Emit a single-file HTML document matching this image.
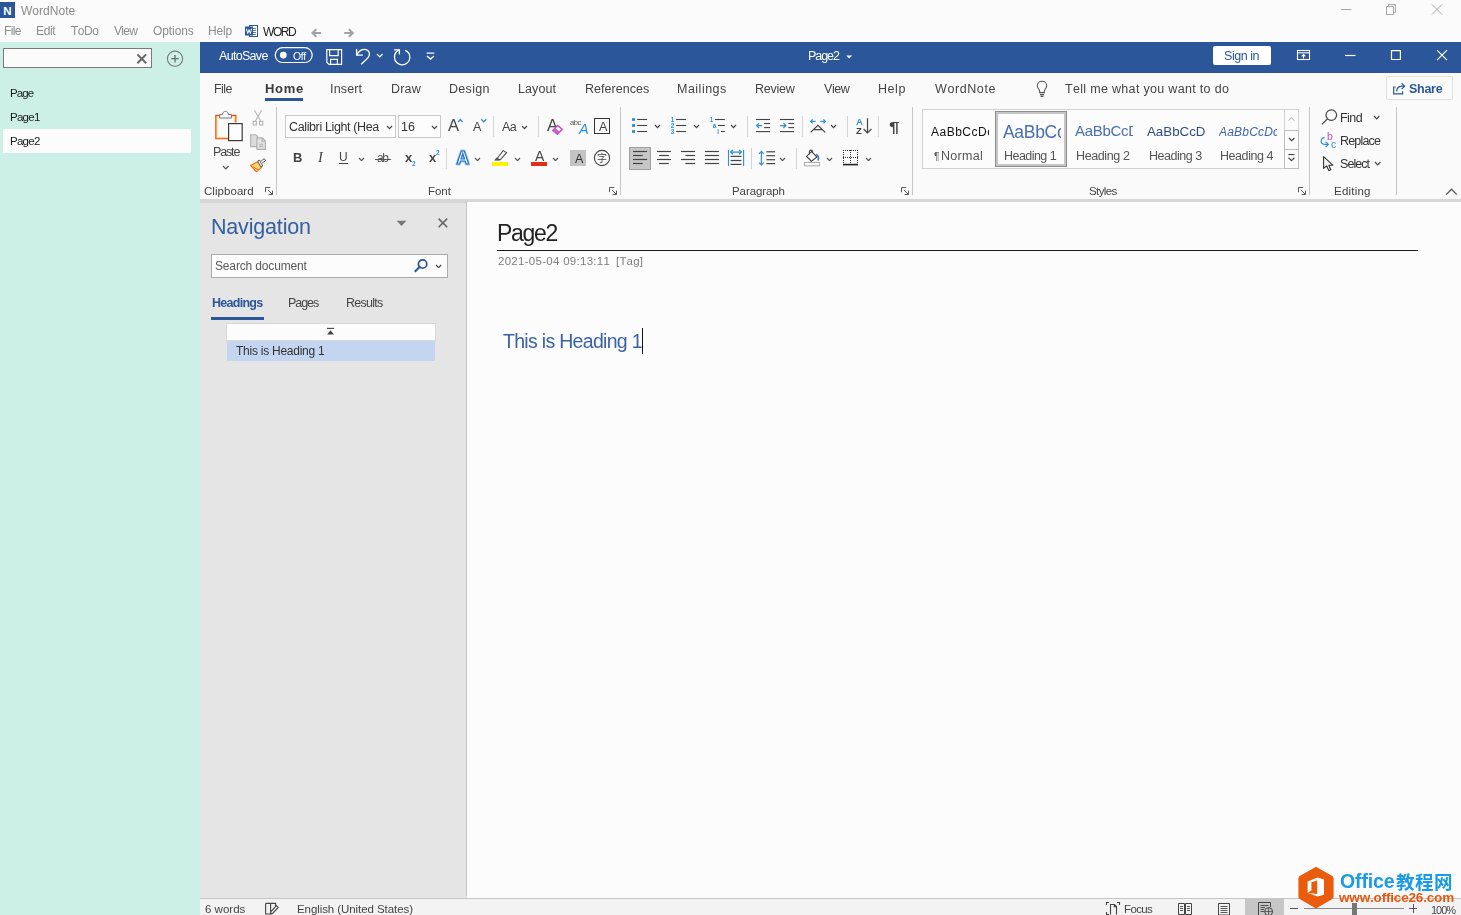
<!DOCTYPE html>
<html><head><meta charset="utf-8"><title>WordNote</title>
<style>
html,body{margin:0;padding:0;}
body{width:1461px;height:915px;overflow:hidden;background:#fbfbfb;font-family:"Liberation Sans","Noto Sans CJK SC",sans-serif;}
#app{position:relative;width:1461px;height:915px;overflow:hidden;}
.t{position:absolute;white-space:pre;line-height:1;will-change:transform;font-kerning:none;}
.r{position:absolute;display:block;}
</style></head><body><div id="app">
<div class="r" style="left:0px;top:0px;width:1461px;height:42px;background:#fbfbfb;"></div>
<div class="r" style="left:0px;top:42px;width:200px;height:873px;background:#cdf0e6;"></div>
<div class="r" style="left:200px;top:42px;width:1261px;height:31px;background:#2b579a;"></div>
<div class="r" style="left:200px;top:73px;width:1261px;height:126px;background:#fafafa;"></div>
<div class="r" style="left:200px;top:199px;width:1261px;height:4px;background:#d6d6d6;"></div>
<div class="r" style="left:200px;top:203px;width:267px;height:695px;background:#e5e5e5;"></div>
<div class="r" style="left:466px;top:202px;width:1px;height:694px;background:#c6c6c6;"></div>
<div class="r" style="left:467px;top:202px;width:994px;height:696px;background:#fcfcfc;"></div>
<div class="r" style="left:200px;top:898px;width:1261px;height:17px;background:#f3f3f3;"></div>
<div class="r" style="left:200px;top:898px;width:1261px;height:1px;background:#c6c6c6;"></div>
<svg class="r" style="left:0px;top:2px;" width="15" height="16" viewBox="0 0 15 16"><rect width="15" height="16" fill="#2b579a"/><text x="7.3" y="12.6" font-family="Liberation Sans, sans-serif" font-weight="bold" font-size="11.5" fill="#fff" text-anchor="middle">N</text></svg>
<span class="t" style="left:21.25px;top:5px;font-size:12px;color:#8a8a8a;letter-spacing:0.024px;">WordNote</span>
<svg class="r" style="left:1340px;top:3px;" width="106" height="13" viewBox="0 0 106 13"><g fill="none" stroke="#a6a6a6" stroke-width="1"><path d="M1 6.5H11.5"/><path d="M46.5 3.5H53.5V11.5H46.5Z"/><path d="M48.5 3.5V1.5H55.5V9.5H53.5"/><path d="M92 1.5L102 11.5M102 1.5L92 11.5"/></g></svg>
<span class="t" style="left:4.32px;top:25px;font-size:12px;color:#8c8c8c;letter-spacing:-0.673px;">File</span>
<span class="t" style="left:36.12px;top:25px;font-size:12px;color:#8c8c8c;letter-spacing:-0.368px;">Edit</span>
<span class="t" style="left:70.53px;top:25px;font-size:12px;color:#8c8c8c;letter-spacing:-0.490px;">ToDo</span>
<span class="t" style="left:113.75px;top:25px;font-size:12px;color:#8c8c8c;letter-spacing:-0.729px;">View</span>
<span class="t" style="left:152.83px;top:25px;font-size:12px;color:#8c8c8c;letter-spacing:-0.092px;">Options</span>
<span class="t" style="left:207.82px;top:25px;font-size:12px;color:#8c8c8c;letter-spacing:-0.130px;">Help</span>
<span class="t" style="left:262.95px;top:26px;font-size:12px;color:#222;letter-spacing:-1.422px;">WORD</span>
<svg class="r" style="left:245px;top:24px;" width="13" height="14" viewBox="0 0 13 14"><rect x="4.5" y="1.5" width="8" height="11" fill="#fff" stroke="#2b579a" stroke-width="1"/><path d="M7 4.5H11M7 6.5H11M7 8.5H11M7 10.5H11" stroke="#2b579a" stroke-width="0.8"/><rect x="0" y="2.5" width="8" height="9" fill="#2b579a"/><path d="M1.4 4.6L2.7 9.5L4 5.6L5.3 9.5L6.6 4.6" fill="none" stroke="#fff" stroke-width="1"/></svg>
<svg class="r" style="left:309px;top:27px;" width="47" height="12" viewBox="0 0 47 12"><g fill="none" stroke="#a2a2a2" stroke-width="2"><path d="M12 6H3.6M7.4 2.2L3.4 6L7.4 9.8"/><path d="M35.2 6H43.6M39.8 2.2L43.8 6L39.8 9.8"/></g></svg>
<div class="r" style="left:3px;top:48px;width:149px;height:20px;background:#fbfbfb;border:1px solid #7a7a7a;box-sizing:border-box;"></div>
<svg class="r" style="left:136px;top:53px;" width="12" height="12" viewBox="0 0 12 12"><path d="M1.4 1.4L10.2 10.2M10.2 1.4L1.4 10.2" stroke="#666" stroke-width="2" fill="none"/></svg>
<svg class="r" style="left:166px;top:50px;" width="18" height="18" viewBox="0 0 18 18"><circle cx="9" cy="8.7" r="7.6" fill="none" stroke="#7a7a7a" stroke-width="1.1"/><path d="M5.2 8.7H12.8M9 4.9V12.5" stroke="#6a6a6a" stroke-width="1.3"/></svg>
<div class="r" style="left:3px;top:129px;width:188px;height:24px;background:#fcfcfc;"></div>
<span class="t" style="left:10.16px;top:88px;font-size:11.5px;color:#1a1a1a;letter-spacing:-0.868px;">Page</span>
<span class="t" style="left:10.16px;top:112px;font-size:11.5px;color:#1a1a1a;letter-spacing:-0.737px;">Page1</span>
<span class="t" style="left:10.16px;top:136px;font-size:11.5px;color:#1a1a1a;letter-spacing:-0.733px;">Page2</span>
<span class="t" style="left:218.58px;top:50px;font-size:12.5px;color:#fff;letter-spacing:-0.689px;">AutoSave</span>
<svg class="r" style="left:274px;top:47px;" width="40" height="17" viewBox="0 0 40 17"><rect x="1.2" y="0.7" width="37" height="14.8" rx="7.4" fill="none" stroke="#fff" stroke-width="1.2"/><circle cx="9.3" cy="8.1" r="3.4" fill="#fff"/></svg>
<span class="t" style="left:293.30px;top:51px;font-size:10.5px;color:#fff;letter-spacing:-0.360px;">Off</span>
<svg class="r" style="left:325px;top:48px;" width="18" height="18" viewBox="0 0 18 18"><g fill="none" stroke="#fff" stroke-width="1.2"><path d="M1.8 1.6H16.6V16.4H4L1.8 14.2Z"/><path d="M4.6 1.6V7.6H13.2V1.6"/><path d="M5.6 16.4V11.4H12.4V16.4"/></g></svg>
<svg class="r" style="left:354px;top:47px;" width="20" height="20" viewBox="0 0 20 20"><g fill="none" stroke="#fff" stroke-width="1.3"><path d="M2.6 2V8.1H8.8"/><path d="M2.8 7.9C4.6 4 8.4 1.6 12 2.6C15.6 3.6 16.4 7.4 14.4 10.2C12.6 12.6 9.8 14.8 7.2 17.4"/></g></svg>
<svg class="r" style="left:375.7px;top:53.15px;" width="7.6" height="4.9" viewBox="0 0 7.6 4.9"><path d="M1 1 L3.8 3.9000000000000004 L6.6 1" fill="none" stroke="#fff" stroke-width="1.15"/></svg>
<svg class="r" style="left:392px;top:47px;" width="20" height="20" viewBox="0 0 20 20"><g fill="none" stroke="#fff" stroke-width="1.3"><path d="M2 2.9H7.4V7.6"/><path d="M13.2 3.3C16.2 4.6 18.2 7.6 17.8 11.2C17.3 15.2 13.8 18 9.8 17.8C5.8 17.6 2.6 14.4 2.5 10.4C2.4 7.2 4.2 4.4 7 3.2"/></g></svg>
<svg class="r" style="left:425px;top:51px;" width="11" height="10" viewBox="0 0 11 10"><path d="M1.6 2.1H9.4" stroke="#fff" stroke-width="1.2"/><path d="M2 5L5.5 8L9 5" fill="none" stroke="#fff" stroke-width="1.4"/></svg>
<span class="t" style="left:808.27px;top:50px;font-size:12.5px;color:#fff;letter-spacing:-1.048px;">Page2</span>
<svg class="r" style="left:845px;top:54px;" width="9" height="6" viewBox="0 0 9 6"><path d="M1.2 1.4H7.2L4.2 4.6Z" fill="#fff"/></svg>
<div class="r" style="left:1213px;top:46px;width:58px;height:19px;background:#fff;border-radius:2px;"></div>
<span class="t" style="left:1224.23px;top:50px;font-size:12.5px;color:#2b579a;letter-spacing:-0.457px;">Sign in</span>
<svg class="r" style="left:1296px;top:49px;" width="15" height="12" viewBox="0 0 15 12"><g fill="none" stroke="#fff" stroke-width="1.1"><rect x="1.5" y="1.5" width="12" height="9"/><path d="M1.5 3.8H13.5"/><path d="M7.5 9.4V5.6M5.6 7.4L7.5 5.5L9.4 7.4"/></g></svg>
<svg class="r" style="left:1344px;top:49px;" width="106" height="13" viewBox="0 0 106 13"><g fill="none" stroke="#fff" stroke-width="1.2"><path d="M1 6.5H11.5"/><path d="M47.5 1.6H56.4V10.5H47.5Z"/><path d="M93 1.2L103 11.2M103 1.2L93 11.2"/></g></svg>
<span class="t" style="left:213.77px;top:83px;font-size:12.5px;color:#444;letter-spacing:-0.587px;">File</span>
<span class="t" style="left:329.65px;top:83px;font-size:12.5px;color:#444;letter-spacing:0.157px;">Insert</span>
<span class="t" style="left:390.77px;top:83px;font-size:12.5px;color:#444;letter-spacing:0.209px;">Draw</span>
<span class="t" style="left:448.97px;top:83px;font-size:12.5px;color:#444;letter-spacing:0.305px;">Design</span>
<span class="t" style="left:517.77px;top:83px;font-size:12.5px;color:#444;letter-spacing:0.077px;">Layout</span>
<span class="t" style="left:584.77px;top:83px;font-size:12.5px;color:#444;letter-spacing:0.039px;">References</span>
<span class="t" style="left:676.77px;top:83px;font-size:12.5px;color:#444;letter-spacing:0.490px;">Mailings</span>
<span class="t" style="left:754.77px;top:83px;font-size:12.5px;color:#444;letter-spacing:-0.238px;">Review</span>
<span class="t" style="left:823.75px;top:83px;font-size:12.5px;color:#444;letter-spacing:-0.423px;">View</span>
<span class="t" style="left:877.77px;top:83px;font-size:12.5px;color:#444;letter-spacing:0.547px;">Help</span>
<span class="t" style="left:934.75px;top:83px;font-size:12.5px;color:#444;letter-spacing:0.592px;">WordNote</span>
<span class="t" style="left:264.93px;top:82px;font-size:13px;color:#3a3a3a;font-weight:bold;letter-spacing:0.665px;">Home</span>
<div class="r" style="left:265px;top:98px;width:38px;height:3px;background:#2b579a;"></div>
<svg class="r" style="left:1035px;top:80px;" width="14" height="18" viewBox="0 0 14 18"><g fill="none" stroke="#555" stroke-width="1.1"><path d="M4.7 11.2C4.7 9.6 2.3 8.6 2.3 5.8C2.3 3.2 4.4 1.3 7 1.3C9.6 1.3 11.7 3.2 11.7 5.8C11.7 8.6 9.3 9.6 9.3 11.2V12.6H4.7Z"/><path d="M4.9 14.6H9.1M5.6 16.4H8.4"/></g></svg>
<span class="t" style="left:1064.92px;top:83px;font-size:12.5px;color:#444;letter-spacing:0.318px;">Tell me what you want to do</span>
<div class="r" style="left:1386px;top:76px;width:67px;height:24px;background:#fbfbfb;border:1px solid #e1e1e1;box-sizing:border-box;border-radius:2px;"></div>
<svg class="r" style="left:1392px;top:82px;" width="14" height="13" viewBox="0 0 14 13"><g fill="none" stroke="#2b579a" stroke-width="1.2"><path d="M3.6 5H1.7V11.8H10.6V9.2"/><path d="M4.6 9.4C4.8 6.4 6.6 4.4 9.6 4.2H12.4M9.6 1.2L12.6 4.2L9.6 7.2"/></g></svg>
<span class="t" style="left:1409.44px;top:83px;font-size:12.5px;color:#2b579a;font-weight:bold;letter-spacing:-0.288px;">Share</span>
<div class="r" style="left:276px;top:107px;width:1px;height:88px;background:#c6c6c6;"></div>
<div class="r" style="left:620px;top:107px;width:1px;height:88px;background:#c6c6c6;"></div>
<div class="r" style="left:912px;top:107px;width:1px;height:88px;background:#c6c6c6;"></div>
<div class="r" style="left:1309px;top:107px;width:1px;height:88px;background:#c6c6c6;"></div>
<div class="r" style="left:1396px;top:107px;width:1px;height:88px;background:#c6c6c6;"></div>
<div class="r" style="left:493px;top:116px;width:1px;height:21px;background:#d4d4d4;"></div>
<div class="r" style="left:538px;top:116px;width:1px;height:21px;background:#d4d4d4;"></div>
<div class="r" style="left:747px;top:116px;width:1px;height:21px;background:#d4d4d4;"></div>
<div class="r" style="left:802px;top:116px;width:1px;height:21px;background:#d4d4d4;"></div>
<div class="r" style="left:847px;top:116px;width:1px;height:21px;background:#d4d4d4;"></div>
<div class="r" style="left:878px;top:116px;width:1px;height:21px;background:#d4d4d4;"></div>
<div class="r" style="left:446px;top:148px;width:1px;height:21px;background:#d4d4d4;"></div>
<div class="r" style="left:751px;top:148px;width:1px;height:21px;background:#d4d4d4;"></div>
<div class="r" style="left:796px;top:148px;width:1px;height:21px;background:#d4d4d4;"></div>
<span class="t" style="left:203.92px;top:186px;font-size:11.5px;color:#444;letter-spacing:0.050px;">Clipboard</span>
<span class="t" style="left:428.36px;top:186px;font-size:11.5px;color:#444;letter-spacing:-0.061px;">Font</span>
<span class="t" style="left:732.36px;top:186px;font-size:11.5px;color:#444;letter-spacing:-0.089px;">Paragraph</span>
<span class="t" style="left:1088.78px;top:186px;font-size:11.5px;color:#444;letter-spacing:-0.616px;">Styles</span>
<span class="t" style="left:1334.36px;top:186px;font-size:11.5px;color:#444;letter-spacing:0.220px;">Editing</span>
<svg class="r" style="left:265px;top:187px;" width="9" height="9" viewBox="0 0 9 9"><g fill="none" stroke="#5a5a5a" stroke-width="1"><path d="M0.5 5.2V0.5H5.2"/><path d="M2.8 2.8L7.4 7.4M7.5 3.6V7.5H3.6"/></g></svg>
<svg class="r" style="left:609px;top:187px;" width="9" height="9" viewBox="0 0 9 9"><g fill="none" stroke="#5a5a5a" stroke-width="1"><path d="M0.5 5.2V0.5H5.2"/><path d="M2.8 2.8L7.4 7.4M7.5 3.6V7.5H3.6"/></g></svg>
<svg class="r" style="left:901px;top:187px;" width="9" height="9" viewBox="0 0 9 9"><g fill="none" stroke="#5a5a5a" stroke-width="1"><path d="M0.5 5.2V0.5H5.2"/><path d="M2.8 2.8L7.4 7.4M7.5 3.6V7.5H3.6"/></g></svg>
<svg class="r" style="left:1298px;top:187px;" width="9" height="9" viewBox="0 0 9 9"><g fill="none" stroke="#5a5a5a" stroke-width="1"><path d="M0.5 5.2V0.5H5.2"/><path d="M2.8 2.8L7.4 7.4M7.5 3.6V7.5H3.6"/></g></svg>
<svg class="r" style="left:1445px;top:187px;" width="13" height="9" viewBox="0 0 13 9"><path d="M1.2 7.6L6.5 2.2L11.8 7.6" fill="none" stroke="#555" stroke-width="1.3"/></svg>
<svg class="r" style="left:213px;top:109px;" width="31" height="33" viewBox="0 0 31 33"><path d="M11 7.4H3.7V28.9H15" fill="none" stroke="#ffd86b" stroke-width="1.6"/><path d="M19 7.4H21.9V13.5" fill="none" stroke="#ffd86b" stroke-width="1.6"/><path d="M6.8 6.4H2.8V29.8H15" fill="none" stroke="#ea4a1f" stroke-width="1.1"/><path d="M18 6.4H22.9V13.5" fill="none" stroke="#ea4a1f" stroke-width="1.1"/><path d="M6.6 9V5.6H9.6C9.6 1.2 15.4 1.2 15.4 5.6H18.4V9Z" fill="#fbfbfb" stroke="#777" stroke-width="1"/><rect x="15.6" y="14.6" width="13.6" height="17" fill="#fdfdfd" stroke="#3b3b3b" stroke-width="1.2"/></svg>
<span class="t" style="left:212.57px;top:146px;font-size:12.5px;color:#444;letter-spacing:-1.146px;">Paste</span>
<svg class="r" style="left:221.79999999999998px;top:165.15px;" width="7.6" height="4.9" viewBox="0 0 7.6 4.9"><path d="M1 1 L3.8 3.9000000000000004 L6.6 1" fill="none" stroke="#555" stroke-width="1.15"/></svg>
<svg class="r" style="left:251px;top:109px;" width="14" height="18" viewBox="0 0 14 18"><g fill="none" stroke="#b4b4b4" stroke-width="1.1"><path d="M3.4 1.2L9.6 12M10.6 1.2L4.4 12"/><rect x="2.2" y="12.4" width="3.2" height="3.6"/><rect x="8.6" y="12.4" width="3.2" height="3.6"/></g></svg>
<svg class="r" style="left:249px;top:133px;" width="18" height="18" viewBox="0 0 18 18"><g stroke="#b0b0b0" stroke-width="1.1"><path d="M1.7 1.7H6.8L8.6 3.5V13.6H1.7Z" fill="#dcdcdc"/><path d="M7.9 4.9H13.4L16.4 7.9V16.4H7.9Z" fill="#e2e2e2"/><path d="M13.2 5V8.2H16.4M10.2 11.2H14.2M10.2 13.4H14.2" fill="none"/></g></svg>
<svg class="r" style="left:249px;top:157px;" width="18" height="17" viewBox="0 0 18 17"><path d="M1.6 8.4L9 4.6L12.4 10.6L7.4 14.8Z" fill="#ffd86b" stroke="#ea6a1f" stroke-width="1.1"/><path d="M3.8 9.8L9.8 13" stroke="#ea6a1f" stroke-width="1" fill="none"/><path d="M8.6 4.2L10.4 3L13.8 9L12 10.2Z" fill="#fff" stroke="#555" stroke-width="1"/><path d="M11.6 4.6L15.2 1.6L16.6 3.6L12.8 6.4" fill="#fff" stroke="#555" stroke-width="1"/></svg>
<div class="r" style="left:285px;top:115px;width:111px;height:23px;background:#fdfdfd;border:1px solid #c8c8c8;box-sizing:border-box;"></div>
<div class="r" style="left:398px;top:115px;width:43px;height:23px;background:#fdfdfd;border:1px solid #c8c8c8;box-sizing:border-box;"></div>
<span class="t" style="left:288.87px;top:121px;font-size:12.5px;color:#333;letter-spacing:-0.373px;">Calibri Light (Hea</span>
<svg class="r" style="left:386.2px;top:125.15px;" width="7.0" height="4.7" viewBox="0 0 7.0 4.7"><path d="M1 1 L3.5 3.7 L6.0 1" fill="none" stroke="#444" stroke-width="1.15"/></svg>
<span class="t" style="left:401.45px;top:121px;font-size:12.5px;color:#333;">16</span>
<svg class="r" style="left:431.0px;top:125.15px;" width="7.0" height="4.7" viewBox="0 0 7.0 4.7"><path d="M1 1 L3.5 3.7 L6.0 1" fill="none" stroke="#444" stroke-width="1.15"/></svg>
<span class="t" style="left:292.53px;top:151px;font-size:13px;color:#444;font-weight:bold;">B</span>
<span class="t" style="left:317.63px;top:150px;font-size:14.5px;color:#444;font-style:italic;font-family:'Liberation Serif',serif;">I</span>
<span class="t" style="left:339.17px;top:151px;font-size:12px;color:#444;">U</span>
<div class="r" style="left:339px;top:163px;width:9px;height:1px;background:#444;"></div>
<svg class="r" style="left:358.09999999999997px;top:156.65px;" width="7.0" height="4.7" viewBox="0 0 7.0 4.7"><path d="M1 1 L3.5 3.7 L6.0 1" fill="none" stroke="#555" stroke-width="1.15"/></svg>
<span class="t" style="left:377.29px;top:152px;font-size:12px;color:#555;letter-spacing:-1.534px;">ab</span>
<div class="r" style="left:375px;top:159px;width:16px;height:1px;background:#555;"></div>
<span class="t" style="left:404.71px;top:151px;font-size:13px;color:#444;font-weight:bold;">x</span>
<span class="t" style="left:411.57px;top:161px;font-size:6.5px;color:#2e8fd8;font-weight:bold;">2</span>
<span class="t" style="left:428.51px;top:151px;font-size:13px;color:#444;font-weight:bold;">x</span>
<span class="t" style="left:435.57px;top:150px;font-size:6.5px;color:#2e8fd8;font-weight:bold;">2</span>
<span class="t" style="left:447.77px;top:117px;font-size:16.5px;color:#444;">A</span>
<svg class="r" style="left:457px;top:118px;" width="7" height="5" viewBox="0 0 7 5"><path d="M1 4L3.3 1.5L5.6 4" fill="none" stroke="#2e8fd8" stroke-width="1.3"/></svg>
<span class="t" style="left:473.08px;top:121px;font-size:12.5px;color:#444;">A</span>
<svg class="r" style="left:480px;top:118px;" width="8" height="5" viewBox="0 0 8 5"><path d="M1.2 1.2L3.8 3.8L6.4 1.2" fill="none" stroke="#2e8fd8" stroke-width="1.3"/></svg>
<span class="t" style="left:502.18px;top:121px;font-size:12.5px;color:#444;letter-spacing:-0.665px;">Aa</span>
<svg class="r" style="left:521.2px;top:125.15px;" width="7.0" height="4.7" viewBox="0 0 7.0 4.7"><path d="M1 1 L3.5 3.7 L6.0 1" fill="none" stroke="#444" stroke-width="1.15"/></svg>
<span class="t" style="left:546.87px;top:117px;font-size:16.5px;color:#444;">A</span>
<svg class="r" style="left:551px;top:124px;" width="13" height="12" viewBox="0 0 13 12"><path d="M6.6 1.4L11.2 5.2L6.4 10.2L1.8 6.4Z" fill="#fbfbfb" stroke="#c050c0" stroke-width="1.5"/><path d="M4.2 3.9L8.8 7.7L6.4 10.2L1.8 6.4Z" fill="#c663c6"/></svg>
<span class="t" style="left:570.28px;top:119px;font-size:7.5px;color:#555;letter-spacing:-0.388px;">abc</span>
<span class="t" style="left:579.02px;top:122px;font-size:14.5px;color:#2e8fd8;font-style:italic;">A</span>
<div class="r" style="left:594px;top:118px;width:16px;height:16px;border:1.2px solid #333;box-sizing:border-box;"></div>
<span class="t" style="left:598.78px;top:121px;font-size:12.5px;color:#444;">A</span>
<svg class="r" style="left:453px;top:148px;" width="20" height="19" viewBox="0 0 20 19"><text x="9.7" y="15.9" text-anchor="middle" font-family="Liberation Sans, sans-serif" font-weight="bold" font-size="17.5" fill="#fff" stroke="#a8cef2" stroke-width="2.8" stroke-linejoin="round">A</text><text x="9.7" y="15.9" text-anchor="middle" font-family="Liberation Sans, sans-serif" font-weight="bold" font-size="17.5" fill="#fff" stroke="#1f6fc4" stroke-width="1.2">A</text></svg>
<svg class="r" style="left:474.2px;top:156.65px;" width="7.0" height="4.7" viewBox="0 0 7.0 4.7"><path d="M1 1 L3.5 3.7 L6.0 1" fill="none" stroke="#555" stroke-width="1.15"/></svg>
<svg class="r" style="left:492px;top:149px;" width="17" height="13" viewBox="0 0 17 13"><path d="M11.2 1.6L14.6 3.6L8.4 10.6L4.2 10.6Z" fill="#fbfbfb" stroke="#555" stroke-width="1.1"/><path d="M4.6 8.6L2 11.6H7.4L8.6 10.4Z" fill="#555"/></svg>
<div class="r" style="left:492px;top:162px;width:16px;height:4px;background:#fff100;"></div>
<svg class="r" style="left:514.2px;top:156.65px;" width="7.0" height="4.7" viewBox="0 0 7.0 4.7"><path d="M1 1 L3.5 3.7 L6.0 1" fill="none" stroke="#555" stroke-width="1.15"/></svg>
<span class="t" style="left:535.07px;top:149px;font-size:14px;color:#444;">A</span>
<div class="r" style="left:531px;top:162px;width:16px;height:4px;background:#e62e12;"></div>
<svg class="r" style="left:552.2px;top:156.65px;" width="7.0" height="4.7" viewBox="0 0 7.0 4.7"><path d="M1 1 L3.5 3.7 L6.0 1" fill="none" stroke="#555" stroke-width="1.15"/></svg>
<div class="r" style="left:570px;top:150px;width:16px;height:16px;background:#c3c3c3;"></div>
<span class="t" style="left:574.78px;top:153px;font-size:12.5px;color:#333;">A</span>
<svg class="r" style="left:593px;top:149px;" width="18" height="18" viewBox="0 0 18 18"><circle cx="9" cy="9" r="7.6" fill="none" stroke="#444" stroke-width="1.1"/><text x="9" y="12.6" text-anchor="middle" font-family="Liberation Sans, Noto Sans CJK SC, sans-serif" font-size="10" fill="#444">字</text></svg>
<svg class="r" style="left:630px;top:116px;" width="18" height="19" viewBox="0 0 18 19"><rect x="2" y="2.1" width="3" height="2.8" fill="#2e8fd8"/><path d="M7.1 3.5H17.1" stroke="#444" stroke-width="1.1" fill="none"/><rect x="2" y="8.1" width="3" height="2.8" fill="#2e8fd8"/><path d="M7.1 9.5H17.1" stroke="#444" stroke-width="1.1" fill="none"/><rect x="2" y="14.1" width="3" height="2.8" fill="#2e8fd8"/><path d="M7.1 15.5H17.1" stroke="#444" stroke-width="1.1" fill="none"/></svg>
<svg class="r" style="left:654.0px;top:124.15px;" width="7.0" height="4.7" viewBox="0 0 7.0 4.7"><path d="M1 1 L3.5 3.7 L6.0 1" fill="none" stroke="#444" stroke-width="1.15"/></svg>
<svg class="r" style="left:669px;top:116px;" width="18" height="19" viewBox="0 0 18 19"><text x="3.6" y="5.8" text-anchor="middle" font-family="Liberation Sans, sans-serif" font-weight="bold" font-size="6.3" fill="#2e8fd8">1</text><path d="M7.1 3.5H17.1" stroke="#444" stroke-width="1.1" fill="none"/><text x="3.6" y="11.8" text-anchor="middle" font-family="Liberation Sans, sans-serif" font-weight="bold" font-size="6.3" fill="#2e8fd8">2</text><path d="M7.1 9.5H17.1" stroke="#444" stroke-width="1.1" fill="none"/><text x="3.6" y="17.8" text-anchor="middle" font-family="Liberation Sans, sans-serif" font-weight="bold" font-size="6.3" fill="#2e8fd8">3</text><path d="M7.1 15.5H17.1" stroke="#444" stroke-width="1.1" fill="none"/></svg>
<svg class="r" style="left:693.0px;top:124.15px;" width="7.0" height="4.7" viewBox="0 0 7.0 4.7"><path d="M1 1 L3.5 3.7 L6.0 1" fill="none" stroke="#444" stroke-width="1.15"/></svg>
<svg class="r" style="left:708px;top:116px;" width="18" height="19" viewBox="0 0 18 19"><text x="3.6" y="5.8" text-anchor="middle" font-family="Liberation Sans, sans-serif" font-weight="bold" font-size="6.3" fill="#2e8fd8">1</text><path d="M7.1 3.5H16.8" stroke="#444" stroke-width="1.1" fill="none"/><text x="6.4" y="11.8" text-anchor="middle" font-family="Liberation Sans, sans-serif" font-weight="bold" font-size="6.3" fill="#2e8fd8">a</text><path d="M9.9 9.5H16.8" stroke="#444" stroke-width="1.1" fill="none"/><text x="10.2" y="17.8" text-anchor="middle" font-family="Liberation Sans, sans-serif" font-weight="bold" font-size="6.3" fill="#2e8fd8">i</text><path d="M13 15.5H16.8" stroke="#444" stroke-width="1.1" fill="none"/></svg>
<svg class="r" style="left:730.1px;top:124.15px;" width="7.0" height="4.7" viewBox="0 0 7.0 4.7"><path d="M1 1 L3.5 3.7 L6.0 1" fill="none" stroke="#444" stroke-width="1.15"/></svg>
<svg class="r" style="left:755px;top:116px;" width="16" height="19" viewBox="0 0 16 19"><path d="M0.9 3.5H15" stroke="#444" stroke-width="1.1" fill="none"/><path d="M9.1 7.5H15" stroke="#444" stroke-width="1.1" fill="none"/><path d="M9.1 11.6H15" stroke="#444" stroke-width="1.1" fill="none"/><path d="M0.9 15.6H15" stroke="#444" stroke-width="1.1" fill="none"/><path d="M7.2 9.6H1.6M4 7.2L1.6 9.6L4 12" fill="none" stroke="#2e8fd8" stroke-width="1.2"/></svg>
<svg class="r" style="left:779px;top:116px;" width="16" height="19" viewBox="0 0 16 19"><path d="M0.9 3.5H15" stroke="#444" stroke-width="1.1" fill="none"/><path d="M9.4 7.5H15" stroke="#444" stroke-width="1.1" fill="none"/><path d="M9.4 11.6H15" stroke="#444" stroke-width="1.1" fill="none"/><path d="M0.9 15.6H15" stroke="#444" stroke-width="1.1" fill="none"/><path d="M1 9.6H6.8M4.4 7.2L6.8 9.6L4.4 12" fill="none" stroke="#2e8fd8" stroke-width="1.2"/></svg>
<svg class="r" style="left:808px;top:117px;" width="20" height="17" viewBox="0 0 20 17"><path d="M2.6 15.4L9.9 8.4L17.2 15.4M5.4 12.7H14.4" fill="none" stroke="#444" stroke-width="1.25"/><path d="M7.6 4.4H2.6M4.6 2.4L2.6 4.4L4.6 6.4M12.4 4.4H17.4M15.4 2.4L17.4 4.4L15.4 6.4" fill="none" stroke="#2e8fd8" stroke-width="1.2"/></svg>
<svg class="r" style="left:830.4000000000001px;top:124.15px;" width="7.0" height="4.7" viewBox="0 0 7.0 4.7"><path d="M1 1 L3.5 3.7 L6.0 1" fill="none" stroke="#444" stroke-width="1.15"/></svg>
<span class="t" style="left:855.56px;top:117px;font-size:9.5px;color:#2e8fd8;font-weight:bold;">A</span>
<span class="t" style="left:855.72px;top:126px;font-size:9.5px;color:#444;font-weight:bold;">Z</span>
<svg class="r" style="left:862px;top:117px;" width="11" height="18" viewBox="0 0 11 18"><path d="M5.5 1.2V16M1.6 12L5.5 16L9.4 12" fill="none" stroke="#444" stroke-width="1.2"/></svg>
<span class="t" style="left:889.28px;top:119px;font-size:15px;color:#444;font-weight:bold;transform:scaleX(1.25);transform-origin:0 0;">¶</span>
<div class="r" style="left:629px;top:147px;width:22px;height:23px;background:#c6c6c6;border:1px solid #a0a0a0;box-sizing:border-box;"></div>
<svg class="r" style="left:632px;top:150px;" width="18" height="16" viewBox="0 0 18 16"><path d="M1 1.5H15.1" stroke="#444" stroke-width="1.2" fill="none"/><path d="M1 5.5H10.7" stroke="#444" stroke-width="1.2" fill="none"/><path d="M1 9.5H15.1" stroke="#444" stroke-width="1.2" fill="none"/><path d="M1 13.5H10.7" stroke="#444" stroke-width="1.2" fill="none"/></svg>
<svg class="r" style="left:656px;top:150px;" width="18" height="16" viewBox="0 0 18 16"><path d="M1 1.5H14.9" stroke="#444" stroke-width="1.2" fill="none"/><path d="M3.1 5.5H12.8" stroke="#444" stroke-width="1.2" fill="none"/><path d="M1 9.5H14.9" stroke="#444" stroke-width="1.2" fill="none"/><path d="M3.1 13.5H12.8" stroke="#444" stroke-width="1.2" fill="none"/></svg>
<svg class="r" style="left:680px;top:150px;" width="18" height="16" viewBox="0 0 18 16"><path d="M1 1.5H15" stroke="#444" stroke-width="1.2" fill="none"/><path d="M5.4 5.5H15" stroke="#444" stroke-width="1.2" fill="none"/><path d="M1 9.5H15" stroke="#444" stroke-width="1.2" fill="none"/><path d="M5.4 13.5H15" stroke="#444" stroke-width="1.2" fill="none"/></svg>
<svg class="r" style="left:704px;top:150px;" width="18" height="16" viewBox="0 0 18 16"><path d="M0.9 1.5H14.9" stroke="#444" stroke-width="1.2" fill="none"/><path d="M0.9 5.5H14.9" stroke="#444" stroke-width="1.2" fill="none"/><path d="M0.9 9.5H14.9" stroke="#444" stroke-width="1.2" fill="none"/><path d="M0.9 13.5H14.9" stroke="#444" stroke-width="1.2" fill="none"/></svg>
<svg class="r" style="left:727px;top:149px;" width="18" height="18" viewBox="0 0 18 18"><path d="M1.5 1V17M16.6 1V17" stroke="#2e8fd8" stroke-width="1.1" fill="none"/><path d="M3.6 3.1H14.4M5.8 1L3.6 3.1L5.8 5.2M12.2 1L14.4 3.1L12.2 5.2" fill="none" stroke="#2e8fd8" stroke-width="1.2"/><path d="M3.6 7.4H14.4" stroke="#444" stroke-width="1.2" fill="none"/><path d="M3.6 11.5H14.4" stroke="#444" stroke-width="1.2" fill="none"/><path d="M3.6 15.4H14.4" stroke="#444" stroke-width="1.2" fill="none"/></svg>
<svg class="r" style="left:757px;top:150px;" width="19" height="16" viewBox="0 0 19 16"><path d="M4.4 1.4V15M2 3.8L4.4 1.4L6.8 3.8M2 12.6L4.4 15L6.8 12.6" fill="none" stroke="#2e8fd8" stroke-width="1.2"/><path d="M9.4 1.8H18.1" stroke="#444" stroke-width="1.2" fill="none"/><path d="M9.4 5.7H18.1" stroke="#444" stroke-width="1.2" fill="none"/><path d="M9.4 9.7H18.1" stroke="#444" stroke-width="1.2" fill="none"/><path d="M9.4 13.6H18.1" stroke="#444" stroke-width="1.2" fill="none"/></svg>
<svg class="r" style="left:779.0px;top:156.65px;" width="7.0" height="4.7" viewBox="0 0 7.0 4.7"><path d="M1 1 L3.5 3.7 L6.0 1" fill="none" stroke="#555" stroke-width="1.15"/></svg>
<svg class="r" style="left:803px;top:149px;" width="18" height="18" viewBox="0 0 18 18"><path d="M8.6 2.6L14 8L8.4 12.2L3.6 7.4Z" fill="#fbfbfb" stroke="#444" stroke-width="1.1"/><path d="M6.4 5.2V2.8C6.4 0.6 9.6 0.6 9.6 2.8V4" fill="none" stroke="#444" stroke-width="1.1"/><path d="M13.2 5.4C15.6 6.6 15.8 9.4 15 11.6" fill="none" stroke="#2e6fc8" stroke-width="1.5"/><rect x="1.6" y="13.4" width="14.8" height="3.4" fill="#fdfdfd" stroke="#a0a0a0" stroke-width="0.9"/></svg>
<svg class="r" style="left:826.2px;top:156.65px;" width="7.0" height="4.7" viewBox="0 0 7.0 4.7"><path d="M1 1 L3.5 3.7 L6.0 1" fill="none" stroke="#555" stroke-width="1.15"/></svg>
<svg class="r" style="left:842px;top:149px;" width="18" height="18" viewBox="0 0 18 18"><path d="M1 1.5H16M1 8.5H16M1.5 1V15M8.5 1V15M15.5 1V15" fill="none" stroke="#333" stroke-width="1" stroke-dasharray="1 1"/><path d="M1 15.6H16" stroke="#222" stroke-width="1.6"/></svg>
<svg class="r" style="left:864.8000000000001px;top:156.65px;" width="7.0" height="4.7" viewBox="0 0 7.0 4.7"><path d="M1 1 L3.5 3.7 L6.0 1" fill="none" stroke="#555" stroke-width="1.15"/></svg>
<div class="r" style="left:922px;top:109px;width:377px;height:60px;background:#fcfcfc;border:1px solid #d2d2d2;box-sizing:border-box;"></div>
<span class="t" style="left:930.58px;top:126px;font-size:12px;color:#111;letter-spacing:0.5px;width:58.22px;overflow:hidden;">AaBbCcDc</span>
<span class="t" style="left:934.41px;top:152px;font-size:10px;color:#555;">¶</span>
<span class="t" style="left:941.27px;top:150px;font-size:12.5px;color:#555;letter-spacing:0.276px;">Normal</span>
<div class="r" style="left:995px;top:111px;width:72px;height:56px;background:#fcfcfc;border:1px solid #8e8e8e;box-sizing:border-box;"></div>
<div class="r" style="left:996px;top:112px;width:70px;height:54px;border:2px solid #c6c6c6;box-sizing:border-box;"></div>
<span class="t" style="left:1002.77px;top:124px;font-size:17.5px;color:#4a6eb0;letter-spacing:-0.3px;width:58.03px;overflow:hidden;">AaBbCc</span>
<span class="t" style="left:1004.37px;top:150px;font-size:12.5px;color:#555;letter-spacing:-0.544px;">Heading 1</span>
<span class="t" style="left:1074.77px;top:123px;font-size:15px;color:#4a6eb0;letter-spacing:-0.3px;width:58.03px;overflow:hidden;">AaBbCcD</span>
<span class="t" style="left:1076.27px;top:150px;font-size:12.5px;color:#555;letter-spacing:-0.392px;">Heading 2</span>
<span class="t" style="left:1146.57px;top:125px;font-size:13.3px;color:#2f4d84;letter-spacing:0px;width:59.23px;overflow:hidden;">AaBbCcD</span>
<span class="t" style="left:1148.57px;top:150px;font-size:12.5px;color:#555;letter-spacing:-0.464px;">Heading 3</span>
<span class="t" style="left:1219.19px;top:126px;font-size:12px;color:#3f65aa;font-style:italic;letter-spacing:0.2px;width:58.11px;overflow:hidden;">AaBbCcDc</span>
<span class="t" style="left:1220.47px;top:150px;font-size:12.5px;color:#555;letter-spacing:-0.437px;">Heading 4</span>
<div class="r" style="left:1284px;top:109px;width:15px;height:60px;border:1px solid #d2d2d2;box-sizing:border-box;"></div>
<div class="r" style="left:1284px;top:130px;width:15px;height:20px;border:1px solid #bdbdbd;box-sizing:border-box;"></div>
<div class="r" style="left:1284px;top:149px;width:15px;height:20px;border:1px solid #bdbdbd;box-sizing:border-box;"></div>
<svg class="r" style="left:1287px;top:116px;" width="9" height="6" viewBox="0 0 9 6"><path d="M1.4 4.6L4.5 1.6L7.6 4.6" fill="none" stroke="#c4c4c4" stroke-width="1.2"/></svg>
<svg class="r" style="left:1287.8px;top:137.15px;" width="7.3999999999999995" height="4.7" viewBox="0 0 7.3999999999999995 4.7"><path d="M1 1 L3.6999999999999997 3.7 L6.3999999999999995 1" fill="none" stroke="#444" stroke-width="1.15"/></svg>
<svg class="r" style="left:1287px;top:153px;" width="9" height="10" viewBox="0 0 9 10"><path d="M1.4 1.6H7.6" stroke="#444" stroke-width="1.1"/><path d="M1.6 4.8L4.5 7.6L7.4 4.8" fill="none" stroke="#444" stroke-width="1.2"/></svg>
<svg class="r" style="left:1320px;top:108px;" width="19" height="18" viewBox="0 0 19 18"><circle cx="11.3" cy="7.1" r="5.3" fill="none" stroke="#444" stroke-width="1.2"/><path d="M7.5 10.9L1.8 16.4" stroke="#444" stroke-width="1.3"/></svg>
<span class="t" style="left:1340.27px;top:112px;font-size:12.5px;color:#333;letter-spacing:-0.562px;">Find</span>
<svg class="r" style="left:1372.8px;top:115.15px;" width="7.3999999999999995" height="4.9" viewBox="0 0 7.3999999999999995 4.9"><path d="M1 1 L3.6999999999999997 3.9000000000000004 L6.3999999999999995 1" fill="none" stroke="#444" stroke-width="1.15"/></svg>
<span class="t" style="left:1326.72px;top:131px;font-size:10.5px;color:#c050c0;">b</span>
<span class="t" style="left:1331.35px;top:139px;font-size:10.5px;color:#2e8fd8;">c</span>
<svg class="r" style="left:1319px;top:135px;" width="12" height="13" viewBox="0 0 12 13"><path d="M5.6 2.4C1.2 3.2 0.8 9 5.4 9.4H9.2M6.6 6.6L9.4 9.4L6.6 12.2" fill="none" stroke="#2e8fd8" stroke-width="1.2"/></svg>
<span class="t" style="left:1340.27px;top:135px;font-size:12.5px;color:#333;letter-spacing:-0.830px;">Replace</span>
<svg class="r" style="left:1322px;top:155px;" width="13" height="17" viewBox="0 0 13 17"><path d="M1.6 1.6V13.4L4.6 10.8L6.8 15.6L8.8 14.8L6.8 10.2H10.8Z" fill="#fbfbfb" stroke="#333" stroke-width="1.1" stroke-linejoin="round"/></svg>
<span class="t" style="left:1340.43px;top:158px;font-size:12.5px;color:#333;letter-spacing:-0.936px;">Select</span>
<svg class="r" style="left:1374.4px;top:161.35px;" width="7.3999999999999995" height="4.9" viewBox="0 0 7.3999999999999995 4.9"><path d="M1 1 L3.6999999999999997 3.9000000000000004 L6.3999999999999995 1" fill="none" stroke="#444" stroke-width="1.15"/></svg>
<span class="t" style="left:211.44px;top:217px;font-size:21.5px;color:#34609f;letter-spacing:-0.181px;">Navigation</span>
<svg class="r" style="left:396px;top:220px;" width="11" height="7" viewBox="0 0 11 7"><path d="M0.6 0.8H10.4L5.5 6Z" fill="#777"/></svg>
<svg class="r" style="left:437px;top:217px;" width="12" height="12" viewBox="0 0 12 12"><path d="M1.6 1.6L10.2 10.2M10.2 1.6L1.6 10.2" fill="none" stroke="#666" stroke-width="1.6"/></svg>
<div class="r" style="left:211px;top:254px;width:237px;height:24px;background:#fcfcfc;border:1px solid #ababab;box-sizing:border-box;"></div>
<span class="t" style="left:214.76px;top:260px;font-size:12px;color:#5a5a5a;letter-spacing:-0.152px;">Search document</span>
<svg class="r" style="left:413px;top:258px;" width="16" height="16" viewBox="0 0 16 16"><circle cx="9.6" cy="6" r="4.2" fill="none" stroke="#2b579a" stroke-width="1.7"/><path d="M6.6 9L1.8 13.8" stroke="#2b579a" stroke-width="2"/></svg>
<svg class="r" style="left:434.59999999999997px;top:263.54999999999995px;" width="7.199999999999999" height="4.7" viewBox="0 0 7.199999999999999 4.7"><path d="M1 1 L3.5999999999999996 3.7 L6.199999999999999 1" fill="none" stroke="#444" stroke-width="1.15"/></svg>
<span class="t" style="left:211.96px;top:297px;font-size:12.5px;color:#2b579a;font-weight:bold;letter-spacing:-0.730px;">Headings</span>
<div class="r" style="left:211px;top:317px;width:53px;height:3px;background:#2b579a;"></div>
<span class="t" style="left:287.77px;top:297px;font-size:12.5px;color:#444;letter-spacing:-1.042px;">Pages</span>
<span class="t" style="left:345.77px;top:297px;font-size:12.5px;color:#444;letter-spacing:-0.734px;">Results</span>
<div class="r" style="left:226px;top:323px;width:210px;height:18px;background:#fcfcfc;border:1px solid #d8d8d8;box-sizing:border-box;"></div>
<svg class="r" style="left:326px;top:327px;" width="9" height="9" viewBox="0 0 9 9"><path d="M1 1.4H8" stroke="#444" stroke-width="1.1"/><path d="M4.5 3.2L8 7.6H1Z" fill="#444"/></svg>
<div class="r" style="left:227px;top:341px;width:208px;height:20px;background:#c3d5f1;"></div>
<span class="t" style="left:236.03px;top:345px;font-size:12px;color:#333;letter-spacing:-0.254px;">This is Heading 1</span>
<span class="t" style="left:496.91px;top:222px;font-size:23px;color:#222;letter-spacing:-1.291px;">Page2</span>
<div class="r" style="left:497px;top:250px;width:921px;height:1px;background:#1a1a1a;"></div>
<span class="t" style="left:497.72px;top:256px;font-size:11.5px;color:#7e7e7e;letter-spacing:0.286px;">2021-05-04 09:13:11</span>
<span class="t" style="left:615.98px;top:256px;font-size:11.5px;color:#7e7e7e;letter-spacing:0.183px;">[Tag]</span>
<span class="t" style="left:502.96px;top:332px;font-size:19.5px;color:#3a62a7;letter-spacing:-0.692px;">This is Heading 1</span>
<div class="r" style="left:642px;top:328px;width:1px;height:26px;background:#111;"></div>
<span class="t" style="left:205.22px;top:904px;font-size:11.5px;color:#444;letter-spacing:0.005px;">6 words</span>
<svg class="r" style="left:264px;top:902px;" width="16" height="13" viewBox="0 0 16 13"><path d="M1.6 1.4H6.6V12M6.6 1.4H11.6V4" fill="none" stroke="#444" stroke-width="1.1"/><path d="M1.6 1.4V12H6" fill="none" stroke="#444" stroke-width="1.1"/><path d="M12.4 3.6L14.2 5.4L8.6 11.4L6.4 12L7 9.6Z" fill="#fbfbfb" stroke="#444" stroke-width="1.1"/></svg>
<span class="t" style="left:296.86px;top:904px;font-size:11.5px;color:#444;letter-spacing:-0.075px;">English (United States)</span>
<svg class="r" style="left:1105px;top:901px;" width="16" height="14" viewBox="0 0 16 14"><path d="M1.5 4V1.5H4M12 1.5H14.5V4M1.5 11V13.5H4" fill="none" stroke="#444" stroke-width="1.1"/><path d="M5.5 13.5V3.5H9.5L11.5 5.5V13.5M9.3 3.6V5.7H11.4" fill="none" stroke="#444" stroke-width="1.1"/></svg>
<span class="t" style="left:1123.66px;top:904px;font-size:11.5px;color:#444;letter-spacing:-0.614px;">Focus</span>
<svg class="r" style="left:1177px;top:902px;" width="16" height="13" viewBox="0 0 16 13"><path d="M1.5 1.5H7.5V12.5H1.5ZM8.5 1.5H14.5V12.5H8.5Z" fill="none" stroke="#444" stroke-width="1"/><path d="M3 4.5H6M3 6.5H6M3 8.5H6M10 4.5H13M10 6.5H13M10 8.5H13" stroke="#444" stroke-width="0.9"/></svg>
<svg class="r" style="left:1217px;top:902px;" width="14" height="13" viewBox="0 0 14 13"><path d="M1.5 1.5H12.5V13H1.5Z" fill="none" stroke="#444" stroke-width="1"/><path d="M3.5 4.5H10.5M3.5 6.5H10.5M3.5 8.5H10.5M3.5 10.5H10.5" stroke="#444" stroke-width="0.9"/></svg>
<div class="r" style="left:1245px;top:899px;width:39px;height:16px;background:#c6c6c6;"></div>
<svg class="r" style="left:1257px;top:901px;" width="17" height="14" viewBox="0 0 17 14"><path d="M1.5 14V1.5H13.5V6" fill="none" stroke="#444" stroke-width="1"/><path d="M3.5 4.5H11.5M3.5 6.5H8M3.5 8.5H7M3.5 10.5H7" stroke="#444" stroke-width="0.9"/><circle cx="11.6" cy="10.6" r="4" fill="#c6c6c6" stroke="#444" stroke-width="1"/><path d="M7.6 10.6H15.6M11.6 6.6V14" stroke="#444" stroke-width="0.8"/></svg>
<div class="r" style="left:1290px;top:908px;width:8px;height:1px;background:#555;"></div>
<div class="r" style="left:1304px;top:908px;width:100px;height:1px;background:#8a8a8a;"></div>
<div class="r" style="left:1352px;top:903px;width:5px;height:12px;background:#777;"></div>
<div class="r" style="left:1409px;top:908px;width:8px;height:1px;background:#555;"></div>
<div class="r" style="left:1412.5px;top:904px;width:1px;height:9px;background:#555;"></div>
<span class="t" style="left:1430.96px;top:905px;font-size:11px;color:#444;letter-spacing:-1.035px;">100%</span>
<svg class="r" style="left:1296px;top:864px;" width="40" height="47" viewBox="0 0 40 47"><path d="M20 3.4L36 12.6Q37 13.2 37 14.4V32.8Q37 34 36 34.6L20 43.8L4 34.6Q3 34 3 32.8V14.4Q3 13.2 4 12.6Z" fill="#ea5b0c" stroke="#ea5b0c" stroke-width="1.2" stroke-linejoin="round"/><path d="M11.6 17.6L21.4 13.6L28 15.4V30.8L21.4 32.6L11.6 28.8L21.2 30V16.6L15.4 18.2V26.6L11.6 28.8Z" fill="#fff"/></svg>
<span class="t" style="left:1339.70px;top:872px;font-size:19.5px;color:#1a9be6;font-weight:bold;letter-spacing:-0.139px;">Office</span>
<span class="t" style="left:1395.80px;top:872px;font-size:18.5px;color:#1a9be6;font-weight:bold;letter-spacing:0.5px;font-family:'Noto Sans CJK SC',sans-serif;">教程网</span>
<span class="t" style="left:1339.14px;top:891px;font-size:13.5px;color:#e8560e;font-weight:bold;letter-spacing:-0.172px;">www.office26.com</span>
</div></body></html>
